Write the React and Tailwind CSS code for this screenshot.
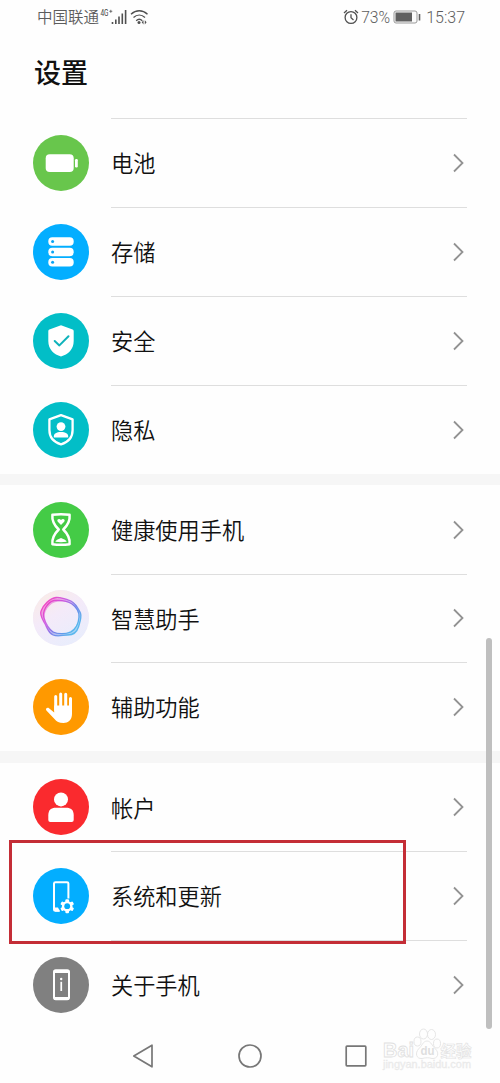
import React from "react";

const BatteryIcon = () => (
  <g fill="#fff">
    <rect x="12.7" y="19.3" width="28" height="17.6" rx="4" />
    <rect x="42" y="24" width="2.8" height="8.4" rx="1.2" />
  </g>
);

const StorageIcon = () => (
  <g fill="#fff">
    {[13.3, 23.7, 34].map((y) => (
      <g key={y}>
        <rect x="15.3" y={y} width="25.4" height="8.5" rx="4" />
        <circle cx="19.6" cy={y + 4.2} r="1.5" fill="#0aa5f5" />
      </g>
    ))}
  </g>
);

const ShieldIcon = () => (
  <g>
    <path d="M28 12.3 39.6 16.6Q40.7 17 40.7 18.2V28C40.7 36.5 35 41.5 28 43.4 21 41.5 15.3 36.5 15.3 28V18.2Q15.3 17 16.4 16.6Z" fill="#fff" />
    <path d="M21.7 28 26.4 32.4 35.5 23.2" fill="none" stroke="#0fb3bb" strokeWidth="2" strokeLinecap="round" strokeLinejoin="round" />
  </g>
);

const PrivacyIcon = () => (
  <g>
    <path d="M28 13.2 39.6 17.4V28C39.6 35.6 34.6 40.4 28 42.3 21.4 40.4 16.4 35.6 16.4 28V17.4Z" fill="none" stroke="#fff" strokeWidth="2.3" strokeLinejoin="round" />
    <circle cx="28" cy="24.6" r="4.4" fill="#fff" />
    <path d="M20.8 35.5V34.5C20.8 31.5 23.4 30 28 30S35.2 31.5 35.2 34.5V35.5Z" fill="#fff" />
  </g>
);

const HourglassIcon = () => (
  <g>
    <path d="M19.4 12.8Q28 11.6 36.6 12.8 37.4 20.5 30.3 27.5 37.4 34.5 36.6 42.2 28 43.4 19.4 42.2 18.6 34.5 25.7 27.5 18.6 20.5 19.4 12.8Z" fill="none" stroke="#fff" strokeWidth="2.5" strokeLinejoin="round" />
    <path d="M28 23 24.8 19.7C23.2 17.8 26 15.8 28 18 30 15.8 32.8 17.8 31.2 19.7Z" fill="#fff" />
    <path d="M22.3 39.8Q23 37.8 28 36 33 37.8 33.7 39.8Q28 40.6 22.3 39.8Z" fill="#fff" />
  </g>
);

const AssistantIcon = () => (
  <g>
    <defs>
      <linearGradient id="ring" gradientUnits="userSpaceOnUse" x1="12" y1="14" x2="42" y2="38">
        <stop offset="0" stopColor="#ed24bd" />
        <stop offset="0.35" stopColor="#c040df" />
        <stop offset="0.62" stopColor="#6168e5" />
        <stop offset="1" stopColor="#36aaea" />
      </linearGradient>
      <linearGradient id="halo" x1="0" y1="0" x2="0.6" y2="1">
        <stop offset="0" stopColor="#fbece2" />
        <stop offset="0.5" stopColor="#f4eaf9" />
        <stop offset="1" stopColor="#e9edfc" />
      </linearGradient>
    </defs>
    <circle cx="28" cy="28" r="28" fill="url(#halo)" />
    <path
      d="M23 7.500C28 7 33 9 38 11C43 13.500 45 18 47.500 23C49 27 47 32 45.500 37C44 42 40 45 35 45C30 45 25 47 20 45C15 43 14 37 11.500 33C9.500 29 6.500 25 8 21C10 15 17 8 23 7.500Z M28.500 11.500A15.800 15.800 0 1 0 28.500 43A15.800 15.800 0 1 0 28.500 11.500Z"
      fill="url(#ring)"
      fillRule="evenodd"
      opacity=".4"
    />
    <g fill="none" stroke="url(#ring)" strokeWidth="1.300" opacity=".75">
      <path d="M23 7.500C28 7 33 9 38 11C43 13.500 45 18 47.500 23C49 27 47 32 45.500 37C44 42 40 45 35 45C30 45 25 47 20 45C15 43 14 37 11.500 33C9.500 29 6.500 25 8 21C10 15 17 8 23 7.500Z" />
      <path d="M21 10.500C27 10 34 10.500 39 14C43 17 46.500 22 46 27C45.500 33 43 39 38 42C33 44 25 44.500 20 42C16 39 12.500 33 11 28C9 22 14 12 21 10.500Z" />
    </g>
  </g>
);

const HandIcon = () => (
  <g stroke="#fff" strokeWidth="3" strokeLinecap="round" fill="none">
    <path d="M22.700 17.600V31M27.700 15V30M32.700 15.300V30M37.500 19.600V32" />
    <path d="M21.200 26.500H39V35C39 41 35 44 30.500 44 26 44 23.500 42.500 21.500 40L13.400 31.500C12 29.500 14.500 28.100 16 29.200L21.200 33.500Z" fill="#fff" stroke="none" />
  </g>
);

const AccountIcon = () => (
  <g fill="#fff">
    <circle cx="28" cy="20.400" r="7" />
    <path d="M15.300 41V36.500C15.300 31 18 28.800 23 28.800H33C38 28.800 40.700 31 40.700 36.500V41Q40.700 43 38.700 43H17.300Q15.300 43 15.300 41Z" />
  </g>
);

const SystemIcon = () => (
  <g>
    <path d="M26.500 42.700H22.500Q21 42.700 21 41.200V15.600Q21 14.200 22.500 14.200H34Q35.400 14.200 35.400 15.600V30.500" fill="none" stroke="#fff" strokeWidth="2" />
    <path d="M21 39.500H25L27 43.500H22Z" fill="#fff" />
    <g transform="translate(34.200 38.200)">
      {[0, 60, 120].map((angle) => (
        <rect key={angle} x="-1.800" y="-7" width="3.600" height="14" rx="1" fill="#fff" transform={`rotate(${angle})`} />
      ))}
      <circle r="5.300" fill="#fff" />
      <circle r="2.900" fill="#03adfc" />
    </g>
  </g>
);

const AboutIcon = () => (
  <g>
    <rect x="21" y="13.300" width="15" height="29" rx="1.800" fill="none" stroke="#fff" strokeWidth="2" />
    <path d="M21 41.300H36M21 14.700H36" stroke="#fff" strokeWidth="2.800" />
    <rect x="27.400" y="24.800" width="1.700" height="9.200" fill="#fff" />
    <circle cx="28.200" cy="22" r="1.200" fill="#fff" />
  </g>
);

const sections = [
  [
    { label: "电池", color: "bg-[#68c64c]", height: "h-[89px]", Icon: BatteryIcon },
    { label: "存储", color: "bg-[#03aeff]", height: "h-[89px]", Icon: StorageIcon },
    { label: "安全", color: "bg-[#02bec7]", height: "h-[89px]", Icon: ShieldIcon },
    { label: "隐私", color: "bg-[#02bec7]", height: "h-[89px]", Icon: PrivacyIcon },
  ],
  [
    { label: "健康使用手机", color: "bg-[#44cb46]", height: "h-[89px]", Icon: HourglassIcon },
    { label: "智慧助手", color: "bg-[#f1e9f9]", height: "h-[88px]", Icon: AssistantIcon },
    { label: "辅助功能", color: "bg-[#ff9900]", height: "h-[89px]", Icon: HandIcon },
  ],
  [
    { label: "帐户", color: "bg-[#fa2a2e]", height: "h-[88px]", Icon: AccountIcon },
    { label: "系统和更新", color: "bg-[#03aeff]", height: "h-[89px]", Icon: SystemIcon, marked: true },
    { label: "关于手机", color: "bg-[#808080]", height: "h-[89px]", Icon: AboutIcon },
  ],
];

function SettingRow({ item, divided }) {
  const { label, color, height, Icon, marked } = item;
  return (
    <li className={`relative flex items-center pr-[33px] pl-[33px] ${height} ${marked ? "z-10" : ""}`}>
      <span className={`size-14 shrink-0 overflow-hidden rounded-full ${color}`}>
        <svg viewBox="0 0 56 56" className="size-14">
          <Icon />
        </svg>
      </span>
      <div className={`ml-[22px] flex h-full flex-1 items-center justify-between border-t pr-[3px] pb-px ${divided ? "border-[#dedede]" : "border-transparent"}`}>
        <span className="pb-px text-[22.2px] leading-8 font-[350]">{label}</span>
        <svg viewBox="0 0 11 20" className="h-5 w-[11px]" fill="none" stroke="#929292" strokeWidth="1.8">
          <path d="M1 1.500 9.500 10 1 18.500" />
        </svg>
      </div>
      {marked && <div className="absolute -top-[11px] left-[9px] h-[104px] w-[397px] border-3 border-[#c42d36]" />}
    </li>
  );
}

function StatusBar() {
  return (
    <header className="flex h-[34px] items-center justify-between pr-[35px] pl-[37px] text-[15.5px] text-[#5d5d5d]">
      <div className="flex items-center">
        <span className="font-[350]">中国联通</span>
        <svg viewBox="0 0 50 20" className="h-5 w-[50px]">
          <text x="1.500" y="8.500" fontSize="8.500" fontWeight="400" fontFamily="Roboto, sans-serif" fill="#444" textLength="8" lengthAdjust="spacingAndGlyphs">4G</text>
          <path d="M10.300 4.300H13.300M11.800 2.800V5.800" stroke="#555" strokeWidth=".8" />
          <path d="M13.500 17V15M16.800 17V12.500M20 17V9.500M23.300 17V6.500M26.600 17V3" stroke="#505050" strokeWidth="1.600" />
          <g fill="none" stroke="#505050" strokeWidth="1.400">
            <path d="M32 7.200C37 2.600 43.500 2.600 48.500 7.200M34.500 10.500C38 7.300 42.500 7.300 46 10.500M37.200 13.700C39 12 41.500 12 43.300 13.700" />
          </g>
          <circle cx="40" cy="15.500" r="1.500" fill="#505050" />
          <path d="M44.500 13.200 42.700 15.300 44.500 17.400ZM45.800 13.200 47.600 15.300 45.800 17.400Z" fill="#505050" />
        </svg>
      </div>
      <div className="flex items-center font-[Roboto] font-light">
        <svg viewBox="0 0 16 16" className="size-4" fill="none" stroke="#505050" strokeWidth="1.300">
          <circle cx="8" cy="8.500" r="5.900" />
          <path d="M8 5.200V8.800L10.500 11M1 4 4 1.300M12 1.300 15 4" />
        </svg>
        <span className="ml-0.5 pt-px text-[15.7px] font-[350]">73%</span>
        <svg viewBox="0 0 28 14" className="ml-[3px] h-3.5 w-7">
          <rect x="1" y="1" width="23" height="12" rx="2" fill="#fafafa" stroke="#9a9a9a" />
          <rect x="2.500" y="2.500" width="16.500" height="9" fill="#606060" />
          <path d="M26.500 4V10.500" stroke="#606060" strokeWidth="1.600" />
        </svg>
        <span className="ml-[5px] pt-px text-[16px] font-[350]">15:37</span>
      </div>
    </header>
  );
}

function Watermark() {
  return (
    <svg viewBox="0 0 96 46" className="absolute top-[1026px] left-[381px] h-[46px] w-24" fill="#fefefe" stroke="#e0e0e0" strokeWidth=".8">
      <text x="2" y="31" fontFamily="Liberation Sans, sans-serif" fontWeight="700" fontSize="20" textLength="31" lengthAdjust="spacingAndGlyphs">Bai</text>
      <ellipse cx="36.500" cy="15.500" rx="3.500" ry="4.500" />
      <ellipse cx="42.500" cy="8" rx="4" ry="5" />
      <ellipse cx="50.500" cy="8.500" rx="4" ry="5" />
      <ellipse cx="56" cy="17.500" rx="3.500" ry="4.500" />
      <path d="M46 15C42 15 41 20 37.500 23C34 27 35 33 41 32.500C45 31.500 48 31.500 51 32.500C57 33 58.500 27 54.500 23C51 20 50 15 46 15Z" />
      <text x="39.500" y="29" fontFamily="Liberation Sans, sans-serif" fontWeight="700" fontSize="13" fill="#dedede" stroke="none" textLength="14" lengthAdjust="spacingAndGlyphs">du</text>
      <text x="59.500" y="30.500" fontFamily="Noto Sans CJK SC, sans-serif" fontWeight="700" fontSize="15.500" stroke="#e4e4e4" strokeWidth=".7" textLength="31" lengthAdjust="spacingAndGlyphs">经验</text>
      <text x="2" y="42" fontFamily="Liberation Sans, sans-serif" fontSize="10" fill="#eeeeee" stroke="#e8e8e8" strokeWidth=".3" textLength="88" lengthAdjust="spacingAndGlyphs">jingyan.baidu.com</text>
    </svg>
  );
}

export default function App() {
  return (
    <div className="relative flex h-[1083px] w-[500px] flex-col overflow-hidden bg-[#fefefe] font-['Noto_Sans_CJK_SC',sans-serif] text-[#111]">
      <StatusBar />
      <div className="h-[84px] shrink-0 pt-[18px] pl-[34px]">
        <h1 className="text-[27px] leading-10 font-medium">设置</h1>
      </div>
      <main>
        {sections.map((items, s) => (
          <React.Fragment key={s}>
            {s === 1 && <div className="h-[11px] bg-[#f6f6f6]" />}
            {s === 2 && <div className="h-3 bg-[#f6f6f6]" />}
            <ul>
              {items.map((item, i) => (
                <SettingRow key={item.label} item={item} divided={s === 0 || i > 0} />
              ))}
            </ul>
          </React.Fragment>
        ))}
      </main>
      <nav className="flex h-[54px] items-center justify-between pr-[133px] pl-[132px]">
        <svg viewBox="0 0 22 26" className="h-[26px] w-[22px]" fill="none" stroke="#777" strokeWidth="1.700" strokeLinejoin="round">
          <path d="M1.800 13 20 2.200V23.800Z" />
        </svg>
        <svg viewBox="0 0 26 26" className="size-[26px]" fill="none" stroke="#777" strokeWidth="1.700">
          <circle cx="13" cy="13" r="11" />
        </svg>
        <svg viewBox="0 0 22 22" className="size-[22px]" fill="none" stroke="#777" strokeWidth="1.700">
          <rect x="1.200" y="1.200" width="19.600" height="19.600" rx=".8" />
        </svg>
      </nav>
      <div className="absolute top-[638px] left-[486px] h-[391px] w-1.5 rounded-full bg-[#bfbfbf]" />
      <Watermark />
    </div>
  );
}
